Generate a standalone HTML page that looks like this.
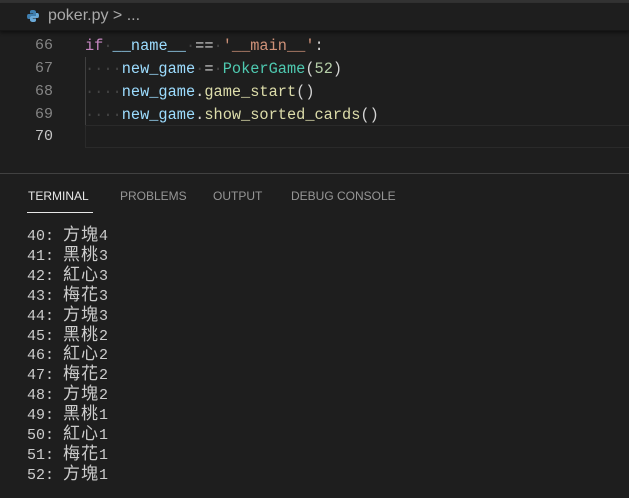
<!DOCTYPE html>
<html><head><meta charset="utf-8"><style>
body{margin:0;width:629px;height:498px;background:#1e1e1e;overflow:hidden;position:relative;font-family:"Liberation Mono","Noto Sans CJK TC",monospace;}
.top{position:absolute;left:0;top:0;width:629px;height:3px;background:#333;}
.bc{position:absolute;left:0;top:3px;width:629px;height:27px;background:#1e1e1e;border-bottom:1px solid #161616;box-shadow:0 2px 3px #111;}
.bc span{position:absolute;left:48px;top:4px;font:16px "Liberation Sans",sans-serif;color:#a9a9a9;}
.ln{position:absolute;left:0;width:53px;text-align:right;font-size:15px;color:#858585;}
.code{position:absolute;left:85px;font-size:15.3px;color:#d4d4d4;white-space:pre;}
.d{color:#444;}
.cur{position:absolute;left:85px;top:125px;width:544px;height:21px;border:1px solid #2a2a2a;border-right:none;}
.guide{position:absolute;left:85px;top:57px;width:1px;height:68px;background:#404040;}
.panel{position:absolute;left:0;top:173px;width:629px;height:1px;background:#414141;}
.tab{position:absolute;top:189px;font:12px "Liberation Sans",sans-serif;color:#969696;}
.ul{position:absolute;left:27px;top:212px;width:66px;height:1px;background:#e7e7e7;}
.term{position:absolute;left:27px;top:227px;font-size:15px;line-height:19.9px;color:#cccccc;white-space:pre;}
.term b{font-weight:normal;font-size:17px;letter-spacing:1px;line-height:10px;}
</style></head><body>
<div class="top"></div>
<div class="bc">
<svg style="position:absolute;left:26px;top:6px" width="14" height="14" viewBox="0 0 14 14"><path d="M7 1C4 1 4 2 4 3v1.5h3.2V5H2.6C1.4 5 1 6 1 7.5S1.5 10 2.6 10H4V8.3C4 7.4 4.8 7 5.6 7h3C9.4 7 10 6.4 10 5.6V3C10 2 9 1 7 1z" fill="#3f7fb0"/><path d="M7 13c3 0 3-1 3-2V9.5H6.8V9h4.6C12.6 9 13 8 13 6.5S12.5 4 11.4 4H10v1.7C10 6.6 9.2 7 8.4 7h-3C4.6 7 4 7.6 4 8.4V11c0 1 1 2 3 2z" fill="#6aa9d8"/></svg>
<span>poker.py &gt; ...</span></div>
<div class="guide"></div>
<div class="cur"></div>
<div class="ln" style="top:37px">66</div>
<div class="ln" style="top:60px">67</div>
<div class="ln" style="top:83px">68</div>
<div class="ln" style="top:106px">69</div>
<div class="ln" style="top:128px;color:#c6c6c6">70</div>
<div class="code" style="top:37px"><span style="color:#c586c0">if</span><span class="d">·</span><span style="color:#9cdcfe">__name__</span><span class="d">·</span>==<span class="d">·</span><span style="color:#ce9178">'__main__'</span>:</div>
<div class="code" style="top:60px"><span class="d">····</span><span style="color:#9cdcfe">new_game</span><span class="d">·</span>=<span class="d">·</span><span style="color:#4ec9b0">PokerGame</span>(<span style="color:#b5cea8">52</span>)</div>
<div class="code" style="top:83px"><span class="d">····</span><span style="color:#9cdcfe">new_game</span>.<span style="color:#dcdcaa">game_start</span>()</div>
<div class="code" style="top:106px"><span class="d">····</span><span style="color:#9cdcfe">new_game</span>.<span style="color:#dcdcaa">show_sorted_cards</span>()</div>
<div class="panel"></div>
<div class="tab" style="left:28px;color:#e7e7e7">TERMINAL</div>
<div class="tab" style="left:120px">PROBLEMS</div>
<div class="tab" style="left:213px">OUTPUT</div>
<div class="tab" style="left:291px">DEBUG CONSOLE</div>
<div class="ul"></div>
<div class="term">40: <b>方塊</b>4
41: <b>黑桃</b>3
42: <b>紅心</b>3
43: <b>梅花</b>3
44: <b>方塊</b>3
45: <b>黑桃</b>2
46: <b>紅心</b>2
47: <b>梅花</b>2
48: <b>方塊</b>2
49: <b>黑桃</b>1
50: <b>紅心</b>1
51: <b>梅花</b>1
52: <b>方塊</b>1</div>
</body></html>
